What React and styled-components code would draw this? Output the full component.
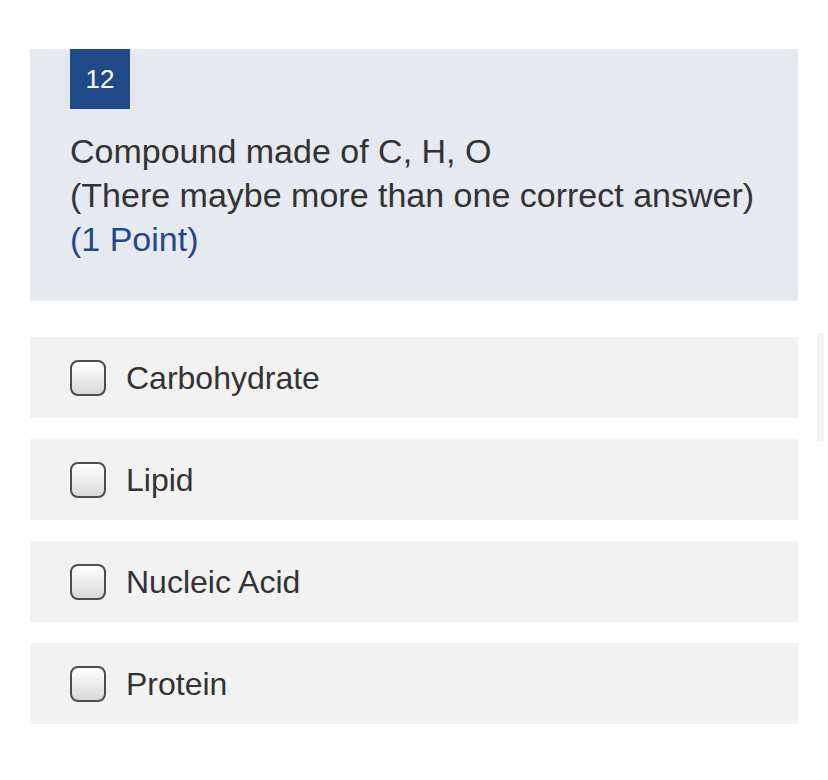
import React from 'react';
import styled, { createGlobalStyle } from 'styled-components';

const GlobalStyle = createGlobalStyle`
  body {
    margin: 0;
    background: #ffffff;
    font-family: "Liberation Sans", Arial, sans-serif;
  }
`;

const Page = styled.div`
  position: relative;
  width: 828px;
  min-height: 780px;
  padding: 49px 30px 0 30px;
  box-sizing: border-box;
`;

const QuestionCard = styled.section`
  background-color: #e6e9f0;
  padding: 0 40px 40px 40px;
  margin-bottom: 36px;
`;

const Badge = styled.div`
  width: 60px;
  height: 60px;
  background-color: #1f4a87;
  color: #ffffff;
  font-size: 26px;
  display: flex;
  align-items: center;
  justify-content: center;
  margin-bottom: 20px;
`;

const QuestionText = styled.div`
  font-size: 34px;
  line-height: 44px;
  color: #333333;
`;

const Points = styled.div`
  color: #1f4a87;
`;

const Options = styled.div`
  display: flex;
  flex-direction: column;
  gap: 21px;
`;

const OptionRow = styled.label`
  display: flex;
  align-items: center;
  gap: 20px;
  height: 81px;
  padding-left: 40px;
  background-color: #f2f2f2;
  cursor: pointer;
`;

const Box = styled.span`
  width: 32px;
  height: 32px;
  border: 2px solid #4d4d4d;
  border-radius: 8px;
  background: linear-gradient(#ffffff, #d9d9d9);
  flex-shrink: 0;
`;

const OptionLabel = styled.span`
  font-size: 32px;
  color: #333333;
  padding-top: 2px;
`;

const ScrollHint = styled.div`
  position: absolute;
  right: 4px;
  top: 333px;
  width: 7px;
  height: 109px;
  background-color: #f3f3f3;
`;

const options = ['Carbohydrate', 'Lipid', 'Nucleic Acid', 'Protein'];

function App() {
  return (
    <Page>
      <GlobalStyle />
      <QuestionCard>
        <Badge>12</Badge>
        <QuestionText>
          Compound made of C, H, O
          <br />
          (There maybe more than one correct answer)
          <Points>(1 Point)</Points>
        </QuestionText>
      </QuestionCard>
      <Options>
        {options.map((o) => (
          <OptionRow key={o}>
            <Box />
            <OptionLabel>{o}</OptionLabel>
          </OptionRow>
        ))}
      </Options>
      <ScrollHint />
    </Page>
  );
}

export default App;
